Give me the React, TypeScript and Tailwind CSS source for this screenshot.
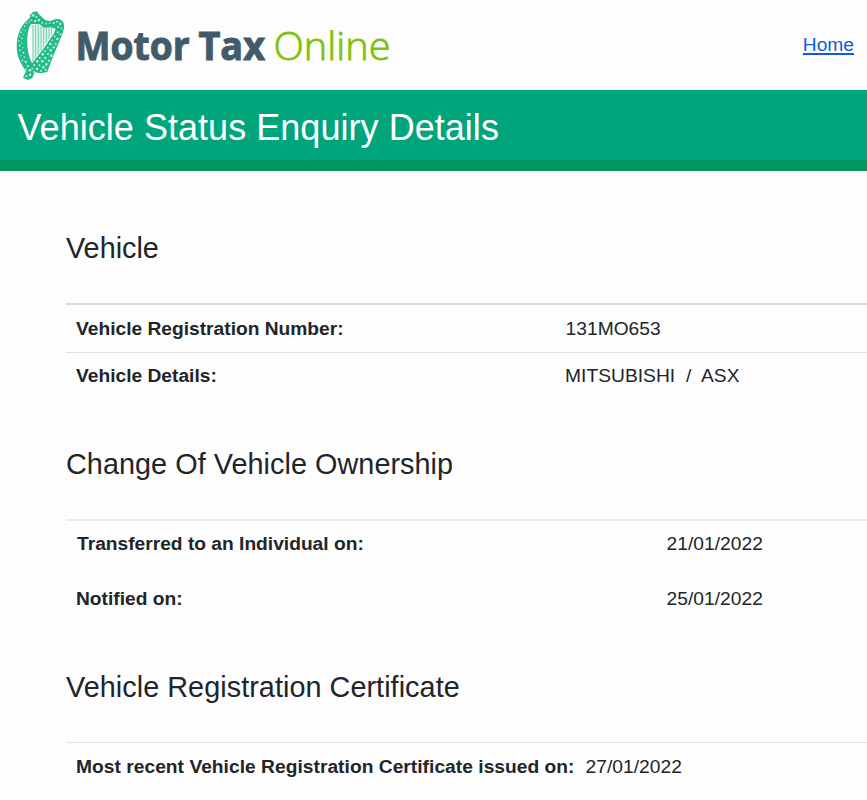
import React from 'react';

interface DetailRowProps {
  label: string;
  value: string;
  className: string;
  labelClassName: string;
}

// x, top and bottom of every harp string
const strings = [
  [99, 74, 186],
  [107, 72, 176],
  [115, 74, 164],
  [123, 79, 152],
  [131, 82, 141],
  [139, 83, 129],
  [147, 82, 118],
  [155, 81, 106],
];

// Light spots that make up the ornament of the frame
const spots = [
  [99, 46, 4], [109, 51, 3], [94, 60, 2.5], [106, 63, 3.5], [117, 60, 4], [127, 68, 3],
  [138, 71, 2.5], [149, 70, 2.5], [161, 69, 3], [171, 65, 3], [181, 72, 3.5], [175, 81, 3],
  [185, 85, 2.5], [80, 70, 2.5], [88, 65, 2], [74, 79, 2.5], [68, 88, 2], [76, 91, 2],
  [62, 97, 3], [71, 103, 2], [59, 108, 2], [66, 115, 2.5], [57, 123, 2.5], [65, 129, 2],
  [59, 137, 2.5], [69, 143, 2], [60, 151, 2.5], [70, 158, 3], [63, 167, 2], [73, 171, 2.5],
  [67, 181, 2.5], [77, 186, 3.5], [84, 198, 3], [78, 208, 2.5], [90, 211, 4],
  [173, 97, 3], [181, 103, 3], [164, 109, 3], [172, 117, 4], [157, 121, 2.5], [167, 131, 3],
  [151, 132, 4], [161, 142, 3.5], [143, 143, 3], [152, 151, 4], [135, 153, 3], [144, 162, 3],
  [154, 167, 4], [128, 163, 4], [136, 174, 3.5], [147, 182, 3.5], [119, 174, 3], [127, 184, 4],
  [139, 193, 4], [112, 184, 4], [118, 196, 3], [130, 202, 4], [103, 195, 3], [111, 207, 4],
  [97, 206, 2.5], [102, 216, 3], [90, 224, 3.5], [79, 229, 3], [123, 212, 3], [137, 209, 3],
];

const HarpLogo: React.FC = () => (
  <svg className="ml-[15px] h-[71px] w-[51px] shrink-0" viewBox="45 30 153 213" aria-hidden="true">
    <path d="M96 74L155 81L157 102L97 190Z" fill="#d8f2e9" />
    {strings.map(([x, top, bottom]) => (
      <path key={x} d={`M${x} ${top}V${bottom}`} stroke="#7fd3b6" strokeWidth="3" />
    ))}
    <path d="M89 46L99 36L111 34L118 44L128 53C136 62 148 65 158 61C169 54 187 57 191 70C195 82 189 98 184 110L160 167L142 216L121 220L104 217L97 234L84 240L69 233L73 223L78 214C66 196 54 178 51 154C48 119 54 82 86 57L91 50ZM93 72C77 96 78 157 97 190L128 151L161 102L167 86L151 82L132 83L119 73L105 72Z" fillRule="evenodd" fill="#25ba8c" />
    <path d="M97 194L166 101M85 220L111 190M91 55L118 55L137 72L159 73" stroke="#0ba779" strokeWidth="2" fill="none" />
    {spots.map(([x, y, r]) => (
      <circle key={`${x}-${y}`} cx={x} cy={y} r={r} fill="#c4eee0" />
    ))}
  </svg>
);

const DetailRow: React.FC<DetailRowProps> = ({ label, value, className, labelClassName }) => (
  <div className={`flex items-center ${className}`}>
    <dt className={`shrink-0 font-bold ${labelClassName}`}>{label}</dt>
    <dd className="whitespace-pre tracking-[0.04px]">{value}</dd>
  </div>
);

const App: React.FC = () => {
  return (
    <div className="h-[800px] w-full overflow-hidden bg-[#fdfdfd] font-['Liberation_Sans',Arial,sans-serif] text-[19.2px] leading-[28px] text-[#212529]">
      <header className="flex h-[90px] items-center justify-between pr-[13px]">
        <div className="flex items-center">
          <HarpLogo />
          <svg className="h-[70px] w-[330px]" viewBox="66 10 330 70" role="img" aria-label="Motor Tax Online">
            <g fontFamily="Open Sans, sans-serif" fontWeight="700" fontSize="38.5" fill="#435b69" stroke="#435b69">
              <text x="75.5" y="59.5" textLength="114" lengthAdjust="spacingAndGlyphs">Motor</text>
              <text x="198.5" y="59.5" textLength="66.5" lengthAdjust="spacingAndGlyphs">Tax</text>
            </g>
            <text x="273.5" y="59.5" fontFamily="Open Sans, sans-serif" fontSize="39" fontWeight="300" fill="#7fc20a" stroke="#7fc20a" strokeWidth="0.8" textLength="117" lengthAdjust="spacingAndGlyphs">Online</text>
          </svg>
        </div>
        <a href="#" className="text-[#0d5bdc] underline decoration-2 underline-offset-2">Home</a>
      </header>

      <div className="h-[81px] border-b-[11px] border-[#00965e] bg-[#00a57c] pt-[14px] pl-[17.5px]">
        <h1 className="text-[36px] leading-[48px] tracking-[0.04px] text-white">Vehicle Status Enquiry Details</h1>
      </div>

      <main className="pl-[66px]">
        <section className="pt-[57px]">
          <h2 className="text-[28.8px] leading-[40px]">Vehicle</h2>
          <dl className="mt-[35px] border-t-2 border-[#d9dbdd]">
            <DetailRow label="Vehicle Registration Number:" value="131MO653" className="h-[47px] pl-[10px]" labelClassName="w-[489.5px]" />
            <DetailRow label="Vehicle Details:" value="MITSUBISHI  /  ASX" className="h-[47px] border-t border-[#dee0e2] pl-[10px]" labelClassName="w-[489px]" />
          </dl>
        </section>

        <section className="pt-[45px]">
          <h2 className="text-[28.8px] leading-[40px] tracking-[0.05px]">Change Of Vehicle Ownership</h2>
          <dl className="mt-[35px] border-t-2 border-[#e9eaeb]">
            <DetailRow label="Transferred to an Individual on:" value="21/01/2022" className="h-[45px] pl-[11px]" labelClassName="w-[589.5px]" />
            <DetailRow label="Notified on:" value="25/01/2022" className="h-[66px] pl-[10px]" labelClassName="w-[590.5px]" />
          </dl>
        </section>

        <section className="pt-[35px]">
          <h2 className="text-[28.8px] leading-[40px] tracking-[0.05px]">Vehicle Registration Certificate</h2>
          <dl className="mt-[35px] border-t border-[#dee0e2]">
            <DetailRow label="Most recent Vehicle Registration Certificate issued on:" value="27/01/2022" className="h-[48px] pl-[10px]" labelClassName="w-[509.5px] tracking-[0.03px]" />
          </dl>
        </section>
      </main>
    </div>
  );
};

export default App;
